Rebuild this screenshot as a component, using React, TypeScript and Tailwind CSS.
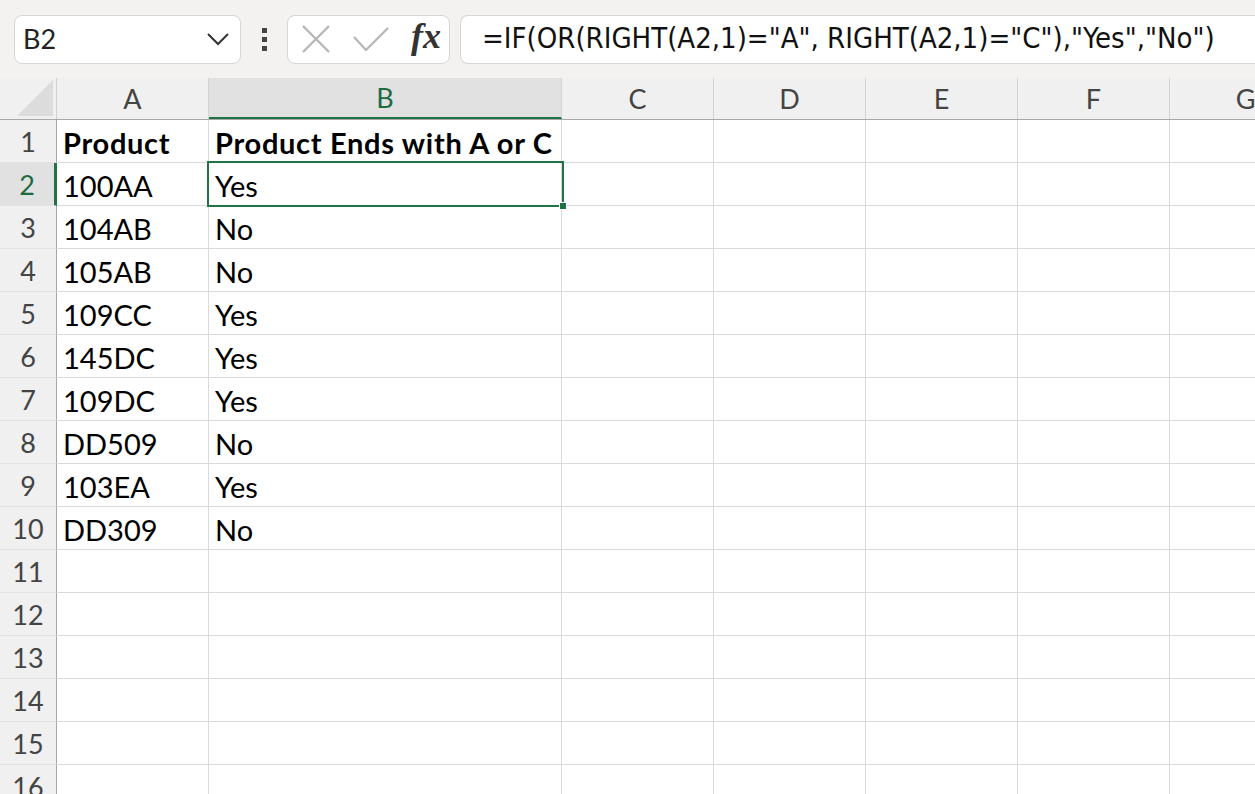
import React from 'react'

const cols = [
  { id: 'A', w: 'w-[152px]' },
  { id: 'B', w: 'w-[353px]' },
  { id: 'C', w: 'w-[152px]' },
  { id: 'D', w: 'w-[152px]' },
  { id: 'E', w: 'w-[152px]' },
  { id: 'F', w: 'w-[152px]' },
  { id: 'G', w: 'w-[152px]' },
]

const data: [string, string][] = [
  ['Product', 'Product Ends with A or C'],
  ['100AA', 'Yes'],
  ['104AB', 'No'],
  ['105AB', 'No'],
  ['109CC', 'Yes'],
  ['145DC', 'Yes'],
  ['109DC', 'Yes'],
  ['DD509', 'No'],
  ['103EA', 'Yes'],
  ['DD309', 'No'],
]

const font = { fontFamily: 'Lato, "Open Sans", sans-serif' }

function Toolbar() {
  return (
    <div className="h-[78px] bg-[#f3f2f1] flex items-center pl-[14px]">
      <div
        className="w-[227px] h-[49px] bg-white rounded-lg border border-[#d6d6d6] flex items-center justify-between pl-2 pr-[10px]"
        style={font}
      >
        <span className="text-[27px] text-[#222]">B2</span>
        <svg width="24" height="14" viewBox="0 0 24 14" fill="none" stroke="#333" strokeWidth="2">
          <path d="M2 2 L12 12 L22 2" />
        </svg>
      </div>
      <div className="w-[46px] flex flex-col items-center gap-[4px]">
        <span className="w-[5px] h-[5px] bg-[#444]" />
        <span className="w-[5px] h-[5px] bg-[#444]" />
        <span className="w-[5px] h-[5px] bg-[#444]" />
      </div>
      <div className="w-[163px] h-[49px] bg-white rounded-lg border border-[#d6d6d6] flex items-center pl-[13px] gap-[22px]">
        <svg width="30" height="30" viewBox="0 0 30 30" fill="none" stroke="#b5b5b5" strokeWidth="2.2">
          <path d="M2 2 L28 28 M28 2 L2 28" />
        </svg>
        <svg width="36" height="28" viewBox="0 0 36 28" fill="none" stroke="#b5b5b5" strokeWidth="2.2">
          <path d="M1 12 L13 25 L35 3" />
        </svg>
        <span
          className="text-[36px] italic font-bold text-[#333] leading-none -mt-[6px]"
          style={{ fontFamily: '"Liberation Serif", "DejaVu Serif", serif' }}
        >
          fx
        </span>
      </div>
      <div className="ml-[10px] flex-1 h-[49px] bg-white rounded-l-lg border border-r-0 border-[#d6d6d6] flex items-center pl-[21px]">
        <span
          className="text-[29px] text-[#111] whitespace-nowrap"
          style={{ fontFamily: '"DejaVu Sans Condensed", "Liberation Sans Narrow", sans-serif', fontStretch: 'condensed' }}
        >
          =IF(OR(RIGHT(A2,1)="A", RIGHT(A2,1)="C"),"Yes","No")
        </span>
      </div>
    </div>
  )
}

function Sheet() {
  const rows = Array.from({ length: 16 }, (_, i) => i + 1)
  return (
    <div className="relative" style={font}>
      <div className="flex h-[42px] bg-[#f0f0f0] border-b border-[#a8a8a8]">
        <div className="w-[57px] shrink-0 border-r border-[#cfcfcf] relative">
          <svg className="absolute right-[3px] bottom-[3px]" width="36" height="36" viewBox="0 0 36 36">
            <path d="M36 0 L36 36 L0 36 Z" fill="#dcdcdc" />
          </svg>
        </div>
        {cols.map((c) => (
          <div
            key={c.id}
            className={`${c.w} shrink-0 flex items-center justify-center pt-[2px] text-[27px] border-r border-[#d4d4d4] ${
              c.id === 'B' ? 'bg-[#e1e1e1] text-[#1e6b41] border-b-2 border-b-[#217346]' : 'text-[#444]'
            }`}
          >
            {c.id}
          </div>
        ))}
      </div>
      {rows.map((r) => {
        const row = data[r - 1]
        return (
          <div key={r} className="flex h-[43px]">
            <div
              className={`w-[57px] shrink-0 flex items-center justify-center pt-[2px] text-[27px] border-b border-[#e2e2e2] ${
                r === 2
                  ? 'bg-[#e1e1e1] text-[#1e6b41] border-r-[3px] border-r-[#217346]'
                  : 'bg-[#f0f0f0] text-[#444] border-r border-r-[#a8a8a8]'
              }`}
            >
              {r}
            </div>
            {cols.map((c, ci) => (
              <div
                key={c.id}
                className={`${c.w} shrink-0 border-r border-b border-[#dadada] flex items-center pl-[6px] pt-[3px] text-[29px] text-black whitespace-nowrap ${
                  r === 1 ? 'font-bold tracking-[0.7px]' : ''
                }`}
              >
                {row && ci < 2 ? row[ci] : ''}
              </div>
            ))}
          </div>
        )
      })}
      <div className="absolute left-[207px] top-[83px] w-[357px] h-[46px] border-2 border-[#217346] pointer-events-none">
        <span className="absolute -right-[5px] -bottom-[5px] w-[8px] h-[8px] bg-[#217346] border border-white" />
      </div>
    </div>
  )
}

export default function App() {
  return (
    <div className="w-[1255px] h-[794px] overflow-hidden bg-white">
      <Toolbar />
      <Sheet />
    </div>
  )
}
